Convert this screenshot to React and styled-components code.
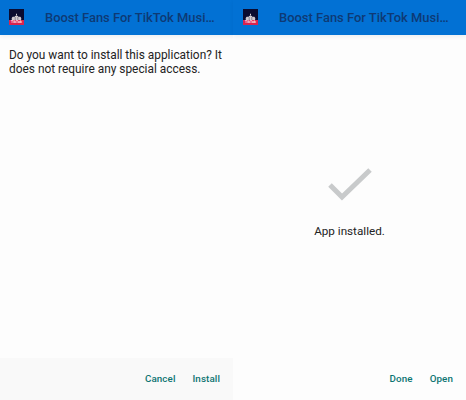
import React from 'react'
import styled, { createGlobalStyle } from 'styled-components'

const GlobalStyle = createGlobalStyle`
  html, body { margin: 0; padding: 0; background: #fdfdfd; }
  body { font-family: Roboto, "Liberation Sans", sans-serif; }
`

const Screens = styled.div`
  display: grid;
  grid-template-columns: 233px 233px;
  width: 466px;
  height: 400px;
  overflow: hidden;
`

const Screen = styled.section`
  display: flex;
  flex-direction: column;
  height: 400px;
  background: #fdfdfd;
`

const AppBar = styled.header`
  display: flex;
  align-items: center;
  flex: none;
  gap: 21px;
  height: 35px;
  padding: 0 15px 0 ${p => (p.$right ? 10 : 9)}px;
  background: #0271d4;
  box-shadow: 0 2px 4px rgba(0, 40, 90, 0.07);
`

const Badge = styled.div`
  position: relative;
  flex: none;
  width: 15px;
  height: 16px;
  margin-top: -1px;
  background: #0a0b30;
  overflow: hidden;
`

const BadgeLabel = styled.span`
  position: absolute;
  left: 0;
  right: 0;
  bottom: 0;
  height: 5px;
  background: #d9234f;
  color: #ffe6ee;
  font-size: 3.6px;
  font-weight: 700;
  line-height: 5px;
  text-align: center;
`

const Title = styled.h1`
  flex: 1;
  min-width: 0;
  margin: 0;
  overflow: hidden;
  color: #0e3a74;
  font-size: 12.95px;
  font-weight: 500;
  line-height: 35px;
  text-overflow: ellipsis;
  white-space: nowrap;
`

const Message = styled.p`
  margin: 0;
  padding: 13px 4px 0 9px;
  color: #232323;
  font-size: 11.9px;
  line-height: 14px;
`

const Body = styled.div`
  flex: 1;
`

const Done = styled.div`
  display: flex;
  flex: 1;
  flex-direction: column;
  align-items: center;
  padding-top: 132px;
`

const DoneText = styled.p`
  margin: 22px 0 0;
  color: #232323;
  font-size: 11.7px;
  line-height: 14px;
`

const Actions = styled.footer`
  display: flex;
  justify-content: flex-end;
  flex: none;
  gap: 17px;
  height: 42px;
  padding: 0 13px 0 0;
  background: ${p => (p.$tinted ? '#f9f9f9' : 'transparent')};
`

const Action = styled.button`
  height: 30px;
  padding: 12px 0 0;
  border: 0;
  background: none;
  color: #0c7472;
  font-family: inherit;
  font-size: 9.8px;
  font-weight: 500;
  letter-spacing: 0.1px;
  line-height: 12px;
`

const AppIcon = () => (
  <Badge>
    <svg width="15" height="11" viewBox="0 0 15 11">
      <path d="M3.4 8 C1.6 4.6 3.6 3 5.4 4 C5.8 2.2 9.2 2.2 9.6 4 C11.4 3 13.4 4.6 11.6 8z" fill="#cfc9d0" />
      <path d="M6.2 4v4M8.8 4v4" stroke="#5a5870" strokeWidth="0.6" />
      <path d="M3.6 8.8h7.8v1.2H3.6z" fill="#d9d3d8" />
      <path d="M7 0.8h1v1.8H7z" fill="#d9d3d8" />
    </svg>
    <BadgeLabel>TikTok</BadgeLabel>
  </Badge>
)

const Check = styled.svg`
  display: block;
  width: 44px;
  height: 35px;
`

export default function App() {
  return (
    <>
      <GlobalStyle />
      <Screens>
        <Screen>
          <AppBar>
            <AppIcon />
            <Title>Boost Fans For TikTok Musical.ly</Title>
          </AppBar>
          <Message>Do you want to install this application? It does not require any special access.</Message>
          <Body />
          <Actions $tinted>
            <Action>Cancel</Action>
            <Action>Install</Action>
          </Actions>
        </Screen>
        <Screen>
          <AppBar $right>
            <AppIcon />
            <Title>Boost Fans For TikTok Musical.ly</Title>
          </AppBar>
          <Done>
            <Check viewBox="0 0 44 35">
              <path d="M2 18 14 30 42 3" fill="none" stroke="#c8cacb" strokeWidth="5" />
            </Check>
            <DoneText>App installed.</DoneText>
          </Done>
          <Actions>
            <Action>Done</Action>
            <Action>Open</Action>
          </Actions>
        </Screen>
      </Screens>
    </>
  )
}
